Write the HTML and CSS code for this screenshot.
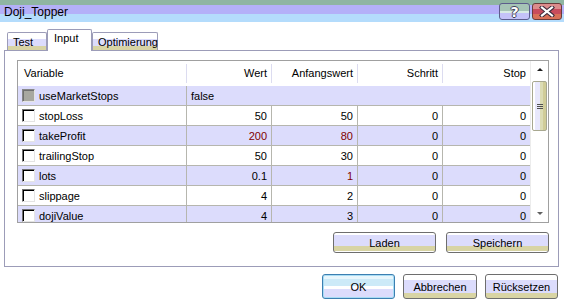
FILE: index.html
```html
<!DOCTYPE html>
<html lang="de">
<head>
    <meta charset="UTF-8">
    <title>Doji_Topper</title>
    <link rel="stylesheet" href="styles.css">
</head>
<body>
    <!-- Titelleiste -->
    <div class="titlebar">
        <span class="title">Doji_Topper</span>
        <div class="caption-buttons">
            <span class="cap-btn help">?</span>
            <span class="cap-btn close">
                <svg width="16" height="11" viewBox="0 0 16 11">
                    <path d="M3 1.5 L13 9.5 M13 1.5 L3 9.5" stroke="#3a2a3a" stroke-width="4.2" stroke-linecap="square" fill="none"/>
                    <path d="M3 1.5 L13 9.5 M13 1.5 L3 9.5" stroke="#fff" stroke-width="2.2" stroke-linecap="square" fill="none"/>
                </svg>
            </span>
        </div>
    </div>

    <!-- Reiter -->
    <div class="tabs">
        <span class="tab tab-test">Test</span>
        <span class="tab tab-input active">Input</span>
        <span class="tab tab-opt">Optimierung</span>
    </div>

    <div class="panel">
        <div class="grid">
            <div class="rows">
                <div class="row head">
                    <div class="cell var">Variable</div>
                    <div class="cell">Wert</div>
                    <div class="cell">Anfangswert</div>
                    <div class="cell">Schritt</div>
                    <div class="cell">Stop</div>
                </div>
                <div class="row alt">
                    <div class="cell var"><span class="check disabled"></span>useMarketStops</div>
                    <div class="cell text wide">false</div>
                </div>
                <div class="row">
                    <div class="cell var"><span class="check"></span>stopLoss</div>
                    <div class="cell">50</div>
                    <div class="cell">50</div>
                    <div class="cell">0</div>
                    <div class="cell">0</div>
                </div>
                <div class="row alt">
                    <div class="cell var"><span class="check"></span>takeProfit</div>
                    <div class="cell changed">200</div>
                    <div class="cell changed">80</div>
                    <div class="cell">0</div>
                    <div class="cell">0</div>
                </div>
                <div class="row">
                    <div class="cell var"><span class="check"></span>trailingStop</div>
                    <div class="cell">50</div>
                    <div class="cell">30</div>
                    <div class="cell">0</div>
                    <div class="cell">0</div>
                </div>
                <div class="row alt">
                    <div class="cell var"><span class="check"></span>lots</div>
                    <div class="cell">0.1</div>
                    <div class="cell changed">1</div>
                    <div class="cell">0</div>
                    <div class="cell">0</div>
                </div>
                <div class="row">
                    <div class="cell var"><span class="check"></span>slippage</div>
                    <div class="cell">4</div>
                    <div class="cell">2</div>
                    <div class="cell">0</div>
                    <div class="cell">0</div>
                </div>
                <div class="row alt">
                    <div class="cell var"><span class="check"></span>dojiValue</div>
                    <div class="cell">4</div>
                    <div class="cell">3</div>
                    <div class="cell">0</div>
                    <div class="cell">0</div>
                </div>
            </div>

            <!-- Bildlaufleiste -->
            <div class="scrollbar">
                <div class="arrow up"></div>
                <div class="track">
                    <div class="thumb"><span class="grip"></span></div>
                </div>
                <div class="arrow down"></div>
            </div>
        </div>

        <div class="panel-buttons">
            <button class="btn wide-btn">Laden</button>
            <button class="btn wide-btn">Speichern</button>
        </div>
    </div>

    <div class="dialog-buttons">
        <button class="btn default">OK</button>
        <button class="btn">Abbrechen</button>
        <button class="btn">Rücksetzen</button>
    </div>
</body>
</html>
```

FILE: styles.css
```css
* {
    box-sizing: border-box;
    margin: 0;
    padding: 0;
}

body {
    width: 564px;
    height: 303px;
    overflow: hidden;
    background-color: #fff;
    font-family: 'Liberation Sans', Arial, sans-serif;
    font-size: 11px;
    color: #000;
}

/* Titelleiste */
.titlebar {
    height: 22px;
    display: flex;
    justify-content: space-between;
    align-items: flex-start;
    padding: 0 2px 0 4px;
    background: linear-gradient(#8fb5a2 0 5px, #b4b0f8 5px 14px, #b4dcfc 14px 22px);
}

.title {
    font-size: 12px;
    line-height: 14px;
    padding-top: 5px;
}

.caption-buttons {
    display: flex;
    gap: 2px;
    margin-top: 3px;
}

.cap-btn {
    width: 31px;
    height: 17px;
    border: 1px solid #5c5c8c;
    border-radius: 3px;
    display: flex;
    align-items: center;
    justify-content: center;
}

.help {
    background: linear-gradient(#a6c4b6 0 7px, #d8ece4 7px 9px, #c4c2f8 9px);
    color: #fff;
    font-size: 14px;
    font-weight: bold;
    font-family: 'DejaVu Sans', sans-serif;
    text-shadow: 1px 0 0 #40405a, -1px 0 0 #40405a, 0 1px 0 #40405a, 0 -1px 0 #40405a;
}

.close {
    width: 30px;
    border-color: #6a3c3c;
    background: linear-gradient(#dc8c8c 0 5px, #c84c5c 5px 10px, #d87058 10px);
}

/* Reiter */
.tabs {
    height: 28px;
    display: flex;
    align-items: flex-end;
    padding-left: 7px;
}

.tab {
    height: 18px;
    padding: 3px 0 0 5px;
    line-height: 13px;
    border: 1px solid #9c9cb8;
    border-bottom: none;
    border-radius: 2px 2px 0 0;
    background: linear-gradient(#fff 0 6px, #dcdcfc 6px 13px, #d8d4a4 13px);
}

.tab-test { width: 40px; }
.tab-input { width: 45px; }
.tab-opt { width: 66px; }

.tab.active {
    height: 22px;
    margin-bottom: -1px;
    padding-top: 2px;
    padding-left: 6px;
    background: #fff;
    position: relative;
    z-index: 1;
}

.panel {
    margin-left: 4px;
    width: 555px;
    height: 217px;
    border: 1px solid #9c9cb8;
    padding: 9px 9px 0 12px;
}

/* Tabelle */
.grid {
    display: flex;
    height: 163px;
    border: 1px solid #a0a0a0;
}

.rows {
    width: 512px;
    overflow: hidden;
}

.row {
    display: grid;
    grid-template-columns: 169px 85px 86px 85px 87px;
    height: 20px;
    border-bottom: 1px solid #b6b6ae;
}

.row.alt {
    background-color: #dcdcfc;
}

.cell {
    border-right: 1px solid #b6b6ae;
    padding: 1px 4px 0;
    line-height: 18px;
    text-align: right;
    white-space: nowrap;
}

.cell:last-child {
    border-right: none;
}

.cell.var {
    display: flex;
    align-items: center;
    gap: 4px;
    text-align: left;
    padding-top: 0;
}

.cell.text {
    text-align: left;
    padding-left: 4px;
}

.cell.wide {
    grid-column: span 4;
    border-right: none;
}

.changed {
    color: #800000;
}

.row.head {
    height: 25px;
    border-bottom: none;
    align-items: center;
}

.head .cell {
    height: 19px;
    padding-top: 0;
    line-height: 19px;
    border-right-color: #dcdcf0;
}

.head .cell.var {
    padding-left: 6px;
}

.check {
    width: 13px;
    height: 13px;
    flex-shrink: 0;
    background-color: #fff;
    border: 1px solid;
    border-color: #707070 #e4e4e4 #e4e4e4 #707070;
    box-shadow: inset 1px 1px 0 #000;
}

.check.disabled {
    background-color: #a8a8a0;
    border-color: #888 #e4e4e4 #e4e4e4 #888;
    box-shadow: inset 1px 1px 0 #707070;
}

/* Bildlaufleiste */
.scrollbar {
    width: 18px;
    display: flex;
    flex-direction: column;
    border-left: 1px solid #ececec;
    background-color: #fff;
}

.arrow {
    height: 17px;
    display: flex;
    align-items: center;
    justify-content: center;
}

.arrow::after {
    content: '';
    border-left: 3px solid transparent;
    border-right: 3px solid transparent;
}

.arrow.up::after {
    border-bottom: 3px solid #202020;
}

.arrow.down::after {
    border-top: 3px solid #606060;
}

.track {
    flex: 1;
    padding-top: 3px;
}

.thumb {
    width: 15px;
    height: 50px;
    margin-left: 1px;
    border: 1px solid #a8a890;
    border-radius: 2px;
    background: linear-gradient(to right, #fff 0 2px, #e8e8fc 2px 7px, #dcdcb4 7px 10px, #d0cc98 10px);
    display: flex;
    align-items: center;
    justify-content: center;
}

.grip {
    width: 6px;
    height: 5px;
    border-top: 1px solid #505050;
    border-bottom: 1px solid #505050;
    background: linear-gradient(transparent 1px, #505050 1px 2px, transparent 2px);
}

/* Knöpfe */
.btn {
    height: 21px;
    font-family: inherit;
    font-size: 11px;
    color: #000;
    border: 1px solid #6e6e6e;
    border-radius: 3px;
    background: linear-gradient(#fff 0 2px, #dcdcfc 2px 13px, #d8d4a4 13px 18px, #fff 18px);
    width: 73px;
}

.panel-buttons {
    display: flex;
    justify-content: flex-end;
    gap: 10px;
    margin-top: 9px;
    padding-right: 0;
}

.wide-btn {
    width: 103px;
}

.dialog-buttons {
    display: flex;
    justify-content: flex-end;
    gap: 8px;
    margin-top: 7px;
    padding-right: 6px;
}

.dialog-buttons .btn {
    height: 25px;
    background: linear-gradient(#fff 0 5px, #dcdcfc 5px 18px, #d8d4a4 18px 23px, #fff 23px);
}

.dialog-buttons .btn:nth-child(2) {
    width: 74px;
}

.dialog-buttons .btn.default {
    border-color: #3c7fb1;
    box-shadow: inset 0 0 0 1px #a8dcf4;
    background: linear-gradient(#e8f6fc 0 4px, #cceaf8 4px 11px, #fff 11px 14px, #dcdcfc 14px);
}
```
